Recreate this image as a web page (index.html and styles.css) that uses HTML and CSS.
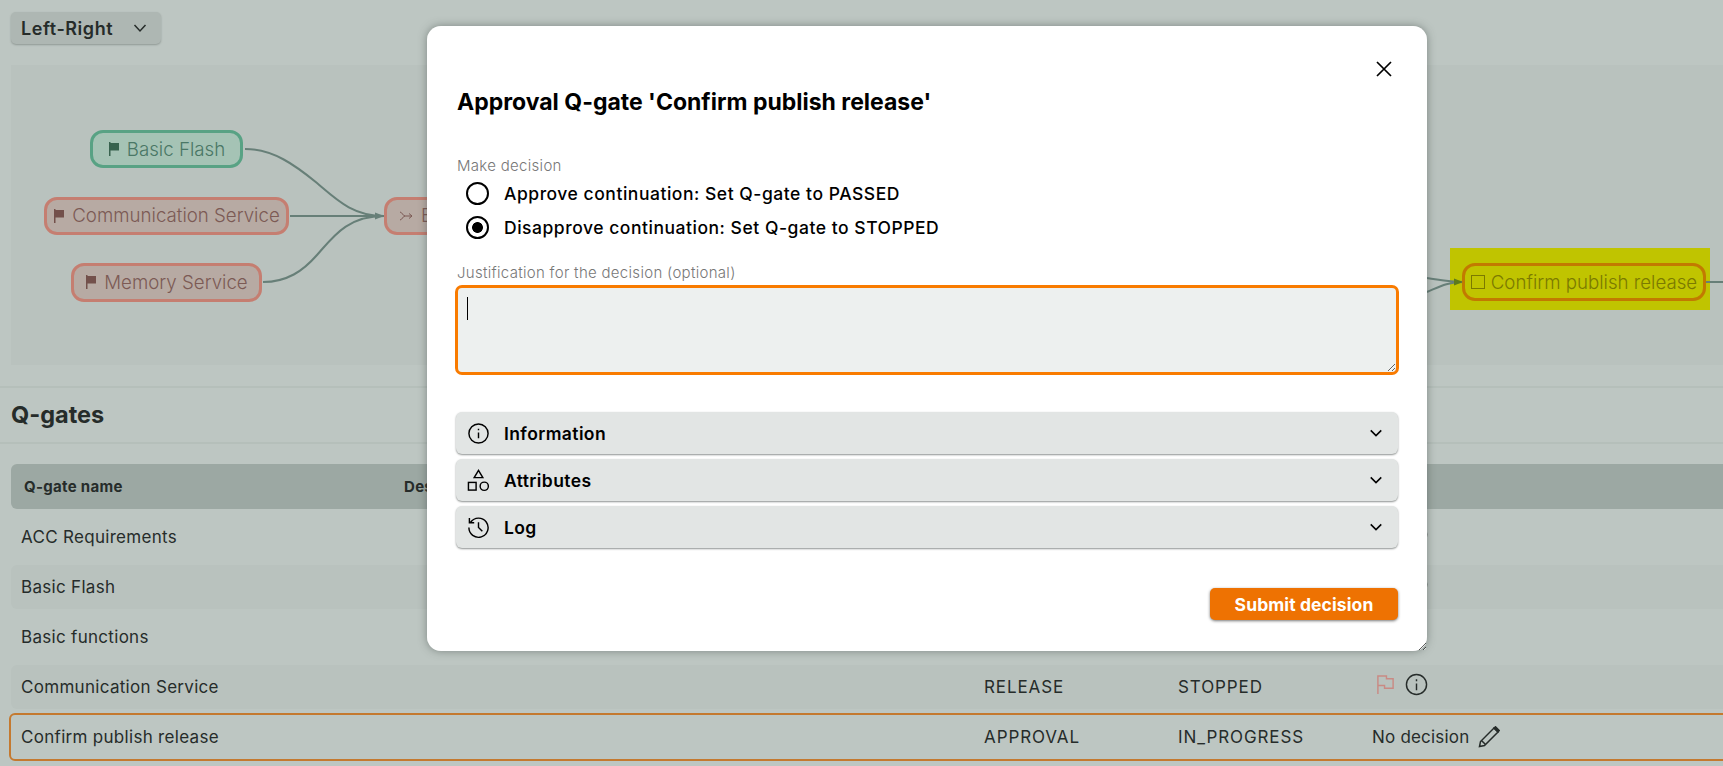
FILE: index.html
```html
<!DOCTYPE html>
<html lang="en">
<head>
<meta charset="utf-8">
<title>Q-gates</title>
<link rel="stylesheet" href="styles.css">
</head>
<body>
<main class="page">
  <div class="toolbar">
    <div class="select"><span>Left-Right</span>
      <svg class="select-chev" viewBox="0 0 16 16"><path d="M2.5 5l5.5 6 5.5-6" /></svg>
    </div>
  </div>
  <section class="graph">
    <div class="highlight"></div>
    <svg class="edges" viewBox="0 0 1712 300" width="1712" height="300">
      <g class="edge">
        <path d="M234 84C262 84 284 100 306 118C326 135 342 151 373 151"/>
        <path d="M279 151H373"/>
        <path d="M252 217C276 217 292 206 306 190C322 172 336 151 373 151"/>
        <path d="M1416 213C1430 215 1436 217 1452 217"/>
        <path d="M1416 227C1428 222 1436 217 1452 217"/>
        <path d="M1695 217H1712"/>
      </g>
      <path class="arrow" d="M364 147.5l9 3.5-9 3.500z"/>
      <path class="arrow arrow-on-hl" d="M1443 213.5l9 3.5-9 3.500z"/>
    </svg>
    <div class="node node-green node-a"><svg class="flag" viewBox="0 0 12 14"><path d="M1 0h1.500v1H11v7.500H2.500V14H1z"/></svg>Basic Flash</div>
    <div class="node node-red node-b"><svg class="flag" viewBox="0 0 12 14"><path d="M1 0h1.500v1H11v7.500H2.500V14H1z"/></svg>Communication Service</div>
    <div class="node node-red node-c"><svg class="flag" viewBox="0 0 12 14"><path d="M1 0h1.500v1H11v7.500H2.500V14H1z"/></svg>Memory Service</div>
    <div class="node node-red node-d"><svg class="merge" viewBox="0 0 14 10"><path d="M1 1c2 0 3 4 5 4-2 0-3 4-5 4M6 5h7M10 2.500L13 5l-3 2.500"/></svg>Basic functions</div>
    <div class="node node-active"><span class="box"></span>Confirm publish release</div>
  </section>
  <h2 class="section-title">Q-gates</h2>
  <section class="table">
    <div class="row head"><span class="c1">Q-gate name</span><span class="c2">Description</span><span class="c3">Type</span><span class="c4">Status</span><span class="c5">Result</span></div>
    <div class="row"><span class="c1">ACC Requirements</span><span class="c2"></span><span class="c3">RELEASE</span><span class="c4">PASSED</span><span class="c5 icons"><svg class="flag-outline" viewBox="0 0 20 22"><path d="M2 21V2h9v3h7v10H9v-3H2"/></svg><svg class="info" viewBox="0 0 24 24"><circle cx="12" cy="12" r="10.500"/><path d="M12 11v7M12 6.500v2"/></svg></span></div>
    <div class="row band"><span class="c1">Basic Flash</span><span class="c2"></span><span class="c3">RELEASE</span><span class="c4">PASSED</span><span class="c5 icons"><svg class="flag-outline" viewBox="0 0 20 22"><path d="M2 21V2h9v3h7v10H9v-3H2"/></svg><svg class="info" viewBox="0 0 24 24"><circle cx="12" cy="12" r="10.500"/><path d="M12 11v7M12 6.500v2"/></svg></span></div>
    <div class="row"><span class="c1">Basic functions</span><span class="c2"></span><span class="c3"></span><span class="c4"></span><span class="c5"></span></div>
    <div class="row band"><span class="c1">Communication Service</span><span class="c2"></span><span class="c3">RELEASE</span><span class="c4">STOPPED</span><span class="c5 icons"><svg class="flag-outline" viewBox="0 0 20 22"><path d="M2 21V2h9v3h7v10H9v-3H2"/></svg><svg class="info" viewBox="0 0 24 24"><circle cx="12" cy="12" r="10.500"/><path d="M12 11v7M12 6.500v2"/></svg></span></div>
    <div class="row selected"><span class="c1">Confirm publish release</span><span class="c2"></span><span class="c3">APPROVAL</span><span class="c4">IN_PROGRESS</span><span class="c5 decision">No decision<svg class="pencil" viewBox="0 0 22 22"><path d="M1.500 20.500l1-5L16 2l4 4L6.500 19.500zM4 15l3 3"/><path class="pencil-tip" d="M16 2l1.500-1.200 3.700 3.700L20 6z"/></svg></span></div>
  </section>
</main>
<div class="backdrop">
  <div class="modal">
    <button class="close" aria-label="Close"><svg viewBox="0 0 16 16"><path d="M1 1l14 14M15 1L1 15"/></svg></button>
    <h1 class="modal-title">Approval Q-gate 'Confirm publish release'</h1>
    <div class="field-label first">Make decision</div>
    <div class="radios">
      <label class="radio"><input type="radio" name="d"><span>Approve continuation: Set Q-gate to PASSED</span></label>
      <label class="radio"><input type="radio" name="d" checked><span>Disapprove continuation: Set Q-gate to STOPPED</span></label>
    </div>
    <div class="field-label second">Justification for the decision (optional)</div>
    <div class="justify-wrap"><textarea class="justify"></textarea><span class="caret"></span></div>
    <div class="accordion">
      <div class="acc"><svg class="acc-icon" viewBox="0 0 24 24"><circle cx="12" cy="12" r="10"/><path d="M12 11v6M12 7v1.500"/></svg><span>Information</span><svg class="acc-chev" viewBox="0 0 16 16"><path d="M2 5l6 6 6-6"/></svg></div>
      <div class="acc"><svg class="acc-icon" viewBox="0 0 24 24"><path d="M12 1.500l4.500 7.500h-9z"/><rect x="1.500" y="14" width="8" height="8"/><circle cx="18" cy="18" r="4.300"/></svg><span>Attributes</span><svg class="acc-chev" viewBox="0 0 16 16"><path d="M2 5l6 6 6-6"/></svg></div>
      <div class="acc"><svg class="acc-icon" viewBox="0 0 24 24"><path d="M3.800 6.500A10 10 0 1 1 2 12M2.500 2v5h5M12 6.500V12l4 4"/></svg><span>Log</span><svg class="acc-chev" viewBox="0 0 16 16"><path d="M2 5l6 6 6-6"/></svg></div>
    </div>
    <div class="actions"><button class="submit">Submit decision</button></div>
  </div>
</div>
</body>
</html>
```
FILE: styles.css
```css
* { box-sizing: border-box; }
html, body { margin: 0; height: 100%; overflow: hidden; }
body { background: #bdc6c2; font-family: Inter, "Noto Sans", sans-serif; color: #262c2a; }

.page { width: 1723px; height: 766px; overflow: hidden; }
.toolbar { padding: 12px 0 0 11px; height: 65px; }
.select { width: 150px; height: 32px; background: #aeb7b3; border-radius: 5px; box-shadow: 0 1px 2px #8f9894; display: flex; align-items: center; justify-content: space-between; padding: 0 13px 0 10px; font-size: 18px; font-weight: 600; letter-spacing: .55px; }
.select-chev { width: 16px; height: 16px; fill: none; stroke: #262c2a; stroke-width: 1.500; }

.graph { position: relative; margin-left: 11px; height: 300px; background: #b9c2be; }
.edges { position: absolute; left: 0; top: 0; }
.edge path { fill: none; stroke: #677f78; stroke-width: 2; }
.arrow { fill: #677f78; }
.arrow-on-hl { fill: #5e7a1a; }
.node { position: absolute; height: 38px; padding-bottom: 1px; border-radius: 13px; border: 3px solid; display: flex; align-items: center; justify-content: center; font-size: 18.700px; font-weight: 300; white-space: nowrap; }
.node-green { background: #a5c3b5; border-color: #58a284; color: #4a7766; }
.node-red { background: #b7aaa3; border-color: #c57e71; color: #7c5a55; }
.node-a { left: 79px; top: 65px; width: 153px; padding-bottom: 0; }
.node-b { left: 33px; top: 132px; width: 245px; }
.node-c { left: 60px; top: 198px; width: 191px; height: 39px; }
.node-d { left: 373px; top: 132px; width: 300px; justify-content: flex-start; padding-left: 12px; }
.flag { flex: none; width: 12px; height: 14px; margin-right: 7px; fill: currentColor; }
.node-green .flag { fill: #38634f; }
.node-red .flag { fill: #73504b; }
.merge { flex: none; width: 14px; height: 10px; margin-right: 8px; fill: none; stroke: currentColor; stroke-width: 1; }
.highlight { position: absolute; left: 1439px; top: 183px; width: 260px; height: 62px; background: #c0c400; }
.node-active { left: 1451px; top: 198px; width: 244px; padding-bottom: 0; background: transparent; border-color: #c27a00; color: #7b7a00; }
.box { flex: none; width: 14px; height: 14px; border: 1.500px solid #7b7a00; margin-right: 6px; }

.section-title { margin: 21px 0 0; height: 58px; padding-left: 11px; border-top: 2px solid #b5bfba; border-bottom: 2px solid #b5bfba; font-size: 23.500px; font-weight: 700; line-height: 54px; }

.table { margin: 20px 0 0 11px; width: 1760px; }
.row { display: flex; height: 44px; margin-top: 6px; align-items: center; font-size: 17px; letter-spacing: .3px; border-radius: 6px; }
.row.head { height: 45px; margin-top: 0; background: #9ca8a3; font-size: 15px; letter-spacing: .3px; font-weight: 700; }
.row.band { background: #b9c2be; }
.row.selected { height: 48px; margin: 4px 0 0 -2px; border: 2px solid #c4792f; }
.c1 { width: 384px; padding-left: 10px; }
.head .c1 { width: 393px; padding-left: 13px; }
.c2 { width: 589px; }
.head .c2 { width: 580px; }
.c3 { width: 194px; letter-spacing: .9px; }
.c4 { width: 194px; letter-spacing: .9px; }
.head .c3, .head .c4 { letter-spacing: .3px; }
.c5 { flex: 1; }
.icons { display: flex; align-items: center; gap: 10px; padding-left: 4px; margin-top: -5px; }
.decision { display: flex; align-items: center; gap: 9px; letter-spacing: .2px; }
.info { flex: none; width: 23px; height: 23px; fill: none; stroke: #262c2a; stroke-width: 1.500; }
.flag-outline { flex: none; width: 19px; height: 21px; fill: none; stroke: #c98a84; stroke-width: 1.500; }
.pencil { flex: none; width: 22px; height: 22px; fill: none; stroke: #262c2a; stroke-width: 1.500; }
.pencil-tip { fill: #262c2a; }

.backdrop { position: fixed; inset: 0; }
.modal { position: absolute; left: 427px; top: 26px; width: 1000px; height: 625px; background: #fff; border-radius: 14px; box-shadow: 0 0 8px rgba(60,70,66,.5); padding: 0 29px; resize: both; overflow: auto; color: #000; }
.close { position: absolute; right: 35px; top: 35px; width: 16px; height: 16px; padding: 0; border: 0; background: none; }
.close svg { display: block; width: 16px; height: 16px; fill: none; stroke: #000; stroke-width: 1.700; }
.modal-title { margin: 61px 0 0 1px; font-size: 23px; line-height: 30px; font-weight: 700; }
.field-label { margin-left: 1px; font-size: 15px; letter-spacing: .3px; line-height: 18px; color: #777; font-weight: 300; }
.field-label.first { margin-top: 40px; }
.field-label.second { margin-top: 20px; }
.radios { margin-top: 1px; }
.radio { display: flex; align-items: center; height: 34px; padding-left: 10px; font-size: 17.500px; letter-spacing: .53px; font-weight: 500; }
.radio input { flex: none; appearance: none; width: 23px; height: 23px; margin: 0 15px 0 0; border: 2px solid #000; border-radius: 50%; background: #fff; }
.radio input:checked { background: radial-gradient(circle, #000 0 5px, #fff 5.800px); }
.justify-wrap { position: relative; margin: 3px 0 0 -1px; width: 944px; height: 90px; }
.justify { display: block; width: 944px; height: 90px; padding: 10px 8px; background: #edf0ef; border: 3px solid #f97b00; border-radius: 7px; outline: none; font: 16px Inter, sans-serif; }
.caret { position: absolute; left: 12px; top: 12px; width: 1px; height: 23px; background: #000; }
.accordion { margin-top: 37px; display: flex; flex-direction: column; gap: 5px; }
.acc { height: 42px; display: flex; align-items: center; padding: 0 15px 0 11px; background: #e2e5e4; border-radius: 6px; box-shadow: 0 1px 2px #8e9291; font-size: 17.500px; letter-spacing: .4px; font-weight: 600; }
.acc-icon { flex: none; width: 23px; height: 23px; margin-right: 14px; fill: none; stroke: #000; stroke-width: 1.500; }
.acc-chev { flex: none; width: 14px; height: 14px; margin-left: auto; fill: none; stroke: #000; stroke-width: 1.800; }
.actions { display: flex; justify-content: flex-end; margin-top: 40px; }
.submit { width: 188px; height: 32px; border: 0; border-radius: 5px; background: #ee7202; color: #fff; font: 700 17.500px Inter, sans-serif; letter-spacing: .1px; box-shadow: 0 1px 3px #777; padding: 0; }
```
